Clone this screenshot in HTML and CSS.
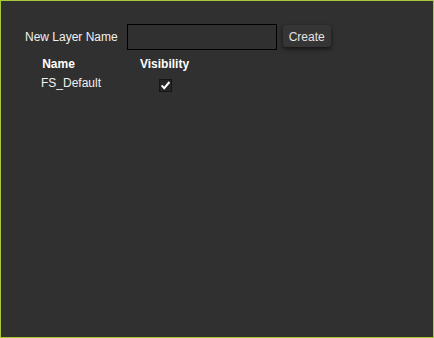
FILE: index.html
```html
<!DOCTYPE html>
<html lang="en">
<head>
  <meta charset="UTF-8">
  <meta name="viewport" content="width=device-width, initial-scale=1.0">
  <title>Layers</title>
  <link rel="stylesheet" href="styles.css">
</head>
<body>
  <div class="panel">
    <!-- New layer form -->
    <div class="new-layer">
      <label class="new-layer-label" for="layerName">New Layer Name</label>
      <input class="new-layer-input" id="layerName" type="text">
      <button class="create-btn">Create</button>
    </div>

    <!-- Layer list -->
    <div class="layers">
      <div class="layers-head">Name</div>
      <div class="layers-head">Visibility</div>
      <div class="layer-name">FS_Default</div>
      <div class="layer-vis">
        <span class="check">
          <svg width="11" height="11" viewBox="0 0 11 11">
            <path d="M1.6 5.4 L4.2 8.2 L9.4 2" fill="none" stroke="#fff" stroke-width="2"/>
          </svg>
        </span>
      </div>
    </div>
  </div>
</body>
</html>
```

FILE: styles.css
```css
html, body {
  margin: 0;
  padding: 0;
}

body {
  font-family: "Liberation Sans", Arial, sans-serif;
  font-size: 12px;
  color: #f0f0f0;
  background: #303030;
}

.panel {
  box-sizing: border-box;
  height: 338px;
  border: 1px solid #a9c937;
  padding: 23px 24px;
}

.new-layer {
  display: flex;
  align-items: flex-start;
}

.new-layer-label {
  align-self: center;
  line-height: 14px;
  margin-right: 9px;
}

.new-layer-input {
  box-sizing: border-box;
  width: 150px;
  height: 26px;
  margin: 0;
  border: 1px solid #000;
  background: #303030;
  color: #eee;
  font: inherit;
}

.create-btn {
  box-sizing: border-box;
  width: 48px;
  height: 22px;
  margin: 1px 0 0 6px;
  padding: 1px 0 0;
  border: none;
  border-radius: 3px;
  background: #353535;
  color: #e4e4e4;
  font: inherit;
  box-shadow: 0 2px 4px rgba(0, 0, 0, 0.6);
  cursor: pointer;
}

.layers {
  display: grid;
  grid-template-columns: 67px 145px;
  margin-top: 7px;
  line-height: 14px;
}

.layers-head {
  font-weight: bold;
  color: #fff;
  text-align: center;
}

.layer-name {
  padding: 5px 0 0 16px;
}

.layer-vis {
  display: flex;
  justify-content: center;
  padding-top: 8px;
}

.check {
  box-sizing: border-box;
  width: 13px;
  height: 13px;
  margin-left: 1px;
  border: 1px solid #151515;
  background: #262626;
  display: flex;
}
```
